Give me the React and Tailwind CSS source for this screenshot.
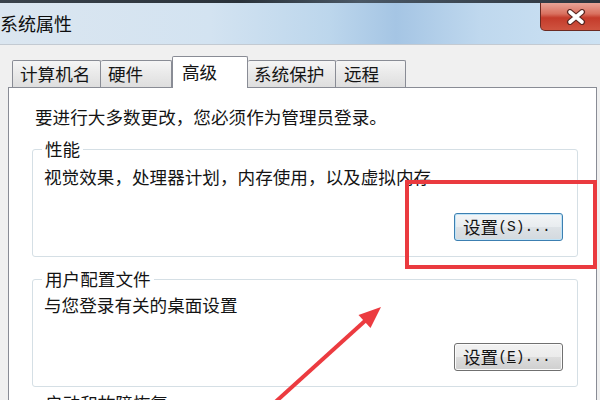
export default function App() {
  return (
    <div className="relative w-[600px] h-[400px] overflow-hidden bg-[#f0f0f0] text-[#141414] font-['Noto_Sans_CJK_SC','Noto_Sans',sans-serif]">
      {/* title bar */}
      <div className="h-[45px] flex flex-col border-b border-[#c3cad2] bg-[linear-gradient(90deg,#dbe6f0_0%,#d3e3f1_35%,#bcd6ec_55%,#a5c5e4_66%,#bfd8ee_80%,#cde2f3_100%)]">
        <div className="h-[3px] shrink-0 bg-[linear-gradient(90deg,#3a434c,#2a323a_40%,#4a5866_60%,#2b333c)]" />
        <div className="flex-1 flex items-start justify-between">
          <div className="mt-[10px] text-[18px] leading-[20px] text-[#0d0d0d]">系统属性</div>
          <div className="shrink-0 w-[72px] h-[28px] -mr-[12px] rounded-b-[5px] border border-t-0 border-[#6b2a22] bg-[linear-gradient(#e9a497,#d9705f_40%,#c43b2b_55%,#cf5440)] flex items-center justify-center">
            <svg width="20" height="16" viewBox="0 0 20 16">
              <path d="M4 3 L16 13 M16 3 L4 13" stroke="#5a2620" strokeWidth="6" strokeLinecap="round" />
              <path d="M4 3 L16 13 M16 3 L4 13" stroke="#ffffff" strokeWidth="3.6" strokeLinecap="round" />
            </svg>
          </div>
        </div>
      </div>

      {/* tabs */}
      <div className="mt-[11px] ml-[12px] h-[31px] flex items-end text-[17.6px] leading-[20px]">
        <div className="w-[89px] h-[27px] pl-[7px] flex items-center border border-b-0 border-[#898c95] rounded-t-[2px] bg-[linear-gradient(#f5f5f5,#e9e9e9_50%,#dedede)]">计算机名</div>
        <div className="w-[71px] h-[27px] pl-[7px] flex items-center border border-b-0 border-l-0 border-[#898c95] rounded-t-[2px] bg-[linear-gradient(#f5f5f5,#e9e9e9_50%,#dedede)]">硬件</div>
        <div className="relative z-10 w-[76px] h-[32px] -mb-px pl-[9px] pb-[2px] flex items-center border border-b-0 border-[#898c95] rounded-t-[2px] bg-white">高级</div>
        <div className="w-[88px] h-[27px] pl-[6px] flex items-center border border-b-0 border-l-0 border-[#898c95] rounded-t-[2px] bg-[linear-gradient(#f5f5f5,#e9e9e9_50%,#dedede)]">系统保护</div>
        <div className="w-[70px] h-[27px] pl-[8px] flex items-center border border-b-0 border-l-0 border-[#898c95] rounded-t-[2px] bg-[linear-gradient(#f5f5f5,#e9e9e9_50%,#dedede)]">远程</div>
      </div>

      {/* panel */}
      <div className="ml-[8px] w-[589px] h-[400px] border border-[#898c95] bg-white pt-[19px] pl-[23px] flex flex-col text-[17.6px] leading-[20px]">
        <div className="pl-[3px]">要进行大多数更改，您必须作为管理员登录。</div>

        {/* 性能 */}
        <div className="mt-[22px] w-[546px] border border-[#d5dfe5] rounded-[3px] flex flex-col pb-[15px]">
          <div className="-mt-[11px] ml-[9px] px-[3px] w-fit bg-white">性能</div>
          <div className="mt-[8px] ml-[11px]">视觉效果，处理器计划，内存使用，以及虚拟内存</div>
          <div className="mt-[26px] pr-[14px] flex justify-end">
            <div className="w-[109px] h-[28px] pl-[8px] flex items-center rounded-[3px] border border-[#3c7fb1] shadow-[inset_0_0_0_1px_#bfe3f7] bg-[linear-gradient(#f3f5f7,#e8ecef_50%,#dde2e6_50%,#d3d9de)]">
              <span>设置</span>
              <span className="font-['Liberation_Mono',monospace] text-[14.6px]">(S)...</span>
            </div>
          </div>
        </div>

        {/* 用户配置文件 */}
        <div className="mt-[22px] w-[546px] border border-[#d5dfe5] rounded-[3px] flex flex-col pb-[15px]">
          <div className="-mt-[11px] ml-[9px] px-[3px] w-fit bg-white">用户配置文件</div>
          <div className="mt-[6px] ml-[11px]">与您登录有关的桌面设置</div>
          <div className="mt-[28px] pr-[14px] flex justify-end">
            <div className="w-[109px] h-[28px] pl-[8px] flex items-center rounded-[3px] border border-[#707070] shadow-[inset_0_0_0_1px_#fbfbfb] bg-[linear-gradient(#f2f2f2,#ebebeb_50%,#dddddd_50%,#cfcfcf)]">
              <span>设置</span>
              <span className="font-['Liberation_Mono',monospace] text-[14.6px]">(<span className="underline">E</span>)...</span>
            </div>
          </div>
        </div>

        {/* 启动和故障恢复 */}
        <div className="mt-[16px] w-[546px] h-[100px] border border-[#d5dfe5] rounded-[3px] flex flex-col">
          <div className="-mt-[11px] ml-[9px] px-[3px] w-fit bg-white">启动和故障恢复</div>
        </div>
      </div>

      {/* annotations */}
      <div className="absolute left-[405px] top-[180px] w-[192px] h-[89px] border-[4px] border-[#ea3a3f]" />
      <svg className="absolute left-0 top-0" width="600" height="400" viewBox="0 0 600 400">
        <line x1="250" y1="425" x2="366" y2="320" stroke="#ec3b40" strokeWidth="4" />
        <polygon points="381,307 370.5,328 358.5,315" fill="#ec3b40" />
      </svg>
    </div>
  );
}
